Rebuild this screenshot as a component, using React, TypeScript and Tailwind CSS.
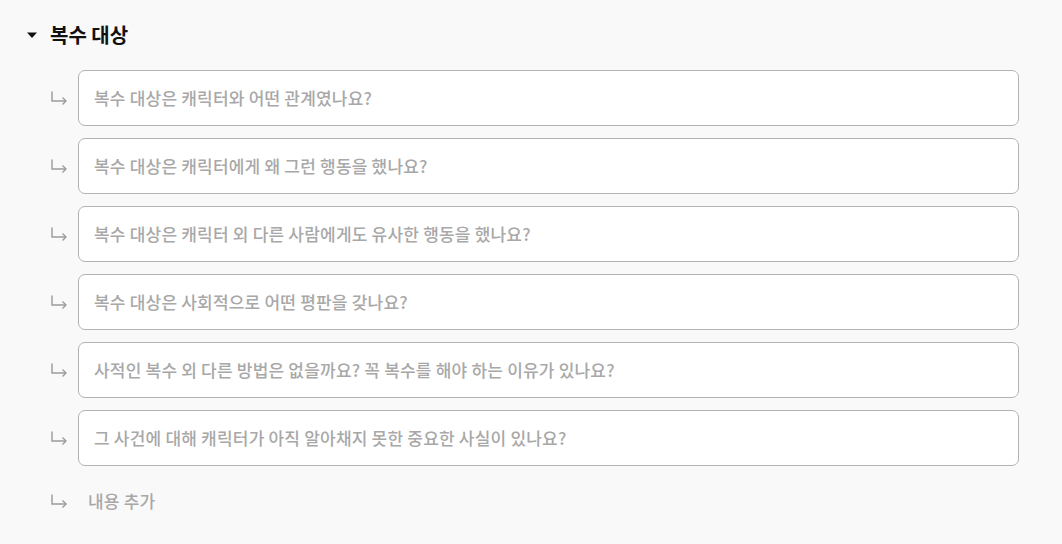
import React from "react";

const questions = [
  "복수 대상은 캐릭터와 어떤 관계였나요?",
  "복수 대상은 캐릭터에게 왜 그런 행동을 했나요?",
  "복수 대상은 캐릭터 외 다른 사람에게도 유사한 행동을 했나요?",
  "복수 대상은 사회적으로 어떤 평판을 갖나요?",
  "사적인 복수 외 다른 방법은 없을까요? 꼭 복수를 해야 하는 이유가 있나요?",
  "그 사건에 대해 캐릭터가 아직 알아채지 못한 중요한 사실이 있나요?",
];

function ReplyArrow() {
  return (
    <svg width="18" height="16" viewBox="0 0 18 16" fill="none" className="text-[#9a9a9a]">
      <path d="M2 1.5V11H16" stroke="currentColor" strokeWidth="1.4" />
      <path d="M12.5 7.5L16 11L12.5 14.5" stroke="currentColor" strokeWidth="1.4" />
    </svg>
  );
}

export default function App() {
  return (
    <div
      className="min-h-screen bg-[#f9f9f9] pl-[24px] pr-[43px] pt-[21px]"
      style={{ fontFamily: '"Noto Sans CJK KR", "Noto Sans", sans-serif' }}
    >
      <div className="flex h-[28px] items-center gap-[12px]">
        <svg width="12" height="8" viewBox="0 0 12 8" className="ml-[2px]">
          <path d="M1 1.5H11L6 7Z" fill="#111" />
        </svg>
        <span className="text-[20px] font-bold text-[#111]">복수 대상</span>
      </div>

      <div className="mt-[21px] flex flex-col gap-[12px] pl-[26px]">
        {questions.map((q) => (
          <div key={q} className="flex items-center">
            <div className="flex w-[28px] shrink-0 items-center">
              <ReplyArrow />
            </div>
            <div className="flex h-[56px] flex-1 items-center rounded-[7px] border border-[#b3b3b3] bg-white px-[15px]">
              <span className="text-[17px] font-medium tracking-[0.2px] text-[#a8a8a8]">{q}</span>
            </div>
          </div>
        ))}
        <div className="mt-[10px] flex items-center">
          <div className="flex w-[28px] shrink-0 items-center">
            <ReplyArrow />
          </div>
          <span className="ml-[10px] text-[17px] font-medium tracking-[0.2px] text-[#a8a8a8]">내용 추가</span>
        </div>
      </div>
    </div>
  );
}
